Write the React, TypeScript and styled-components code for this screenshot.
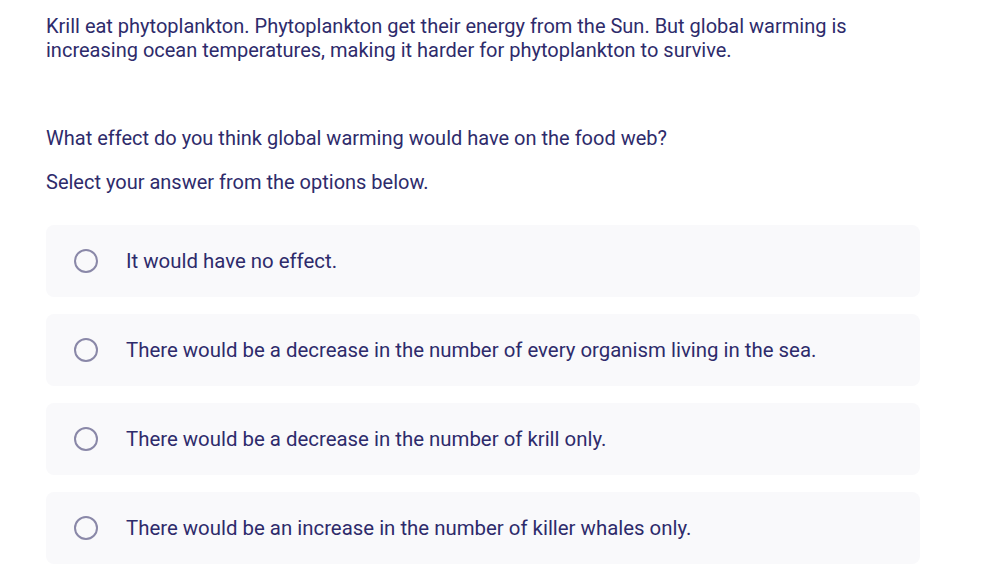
import styled, { createGlobalStyle } from 'styled-components';

const GlobalStyle = createGlobalStyle`
  body {
    margin: 0;
    background: #ffffff;
    font-family: Roboto, "Liberation Sans", sans-serif;
  }
`;

const options = [
  'It would have no effect.',
  'There would be a decrease in the number of every organism living in the sea.',
  'There would be a decrease in the number of krill only.',
  'There would be an increase in the number of killer whales only.',
];

const App = () => {
  return (
    <Page>
      <GlobalStyle />
      <Intro>
        Krill eat phytoplankton. Phytoplankton get their energy from the Sun. But global warming is
        increasing ocean temperatures, making it harder for phytoplankton to survive.
      </Intro>
      <Question>What effect do you think global warming would have on the food web?</Question>
      <Hint>Select your answer from the options below.</Hint>
      <Options>
        {options.map((text) => (
          <Option key={text}>
            <Radio />
            <OptionText>{text}</OptionText>
          </Option>
        ))}
      </Options>
    </Page>
  );
};

export default App;

const Page = styled.div`
  padding: 14px 73px 0 46px;
  color: #2e2b6b;
`;

const Intro = styled.p`
  margin: 0;
  font-size: 20px;
  line-height: 24px;
`;

const Question = styled.p`
  margin: 64px 0 0;
  font-size: 20px;
  line-height: 24px;
`;

const Hint = styled.p`
  margin: 20px 0 0;
  font-size: 20px;
  line-height: 24px;
`;

const Options = styled.div`
  margin-top: 31px;
  display: flex;
  flex-direction: column;
  gap: 17px;
`;

const Option = styled.label`
  display: flex;
  align-items: center;
  height: 72px;
  padding: 0 28px;
  background: #f9f9fb;
  border-radius: 8px;
  cursor: pointer;
`;

const Radio = styled.span`
  width: 20px;
  height: 20px;
  border: 2px solid #8a88a8;
  border-radius: 50%;
  flex-shrink: 0;
`;

const OptionText = styled.span`
  margin-left: 28px;
  font-size: 20.4px;
  line-height: 24px;
`;
